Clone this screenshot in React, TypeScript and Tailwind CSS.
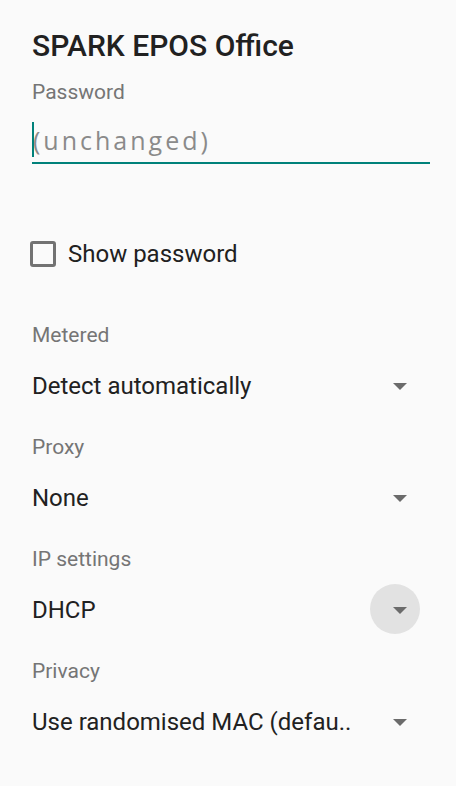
import React from "react";

const Arrow = ({ ripple }: { ripple?: boolean }) => (
  <div className="relative w-[50px] h-[50px] flex items-center justify-center">
    {ripple && (
      <div className="absolute left-[-5px] top-[-1px] w-[50px] h-[50px] rounded-full bg-[#e2e2e2]" />
    )}
    <svg className="relative" width="14" height="7" viewBox="0 0 14 7">
      <path d="M0 0 L14 0 L7 7 Z" fill="#6b6b6b" />
    </svg>
  </div>
);

const Section = ({
  label,
  value,
  ripple,
  first,
}: {
  label: string;
  value: string;
  ripple?: boolean;
  first?: boolean;
}) => (
  <div className={first ? "mt-[54px]" : "mt-[23px]"}>
    <div className="text-[21px] leading-[26px] text-[#757575]">{label}</div>
    <div className="mt-[13px] h-[50px] flex items-center justify-between">
      <div className="text-[24px] leading-[28px] text-[#212121] mb-[1px] whitespace-nowrap">
        {value}
      </div>
      <div className="mr-[5px]">
        <Arrow ripple={ripple} />
      </div>
    </div>
  </div>
);

export default function App() {
  return (
    <div
      className="w-[456px] h-[786px] bg-[#fafafa] pl-[32px] pr-[26px] flex flex-col overflow-hidden"
      style={{ fontFamily: "Roboto, 'Liberation Sans', sans-serif" }}
    >
      <div className="pt-[28px] text-[30px] leading-[36px] font-medium text-[#212121]">
        SPARK EPOS Office
      </div>
      <div className="mt-[15px] text-[21px] leading-[26px] text-[#757575]">Password</div>
      <div className="relative mt-[17px] h-[42px] border-b-2 border-[#00817a]">
        <div
          className="pt-[2px] pl-[1px] text-[25px] leading-[32px] text-[#8a8a8a] tracking-[3px]"
          style={{ fontFamily: "'Open Sans', sans-serif" }}
        >
          (unchanged)
        </div>
        <div className="absolute left-0 top-0 w-[2px] h-[35px] bg-[#00817a]" />
      </div>
      <div className="mt-[76px] flex items-center h-[28px] -ml-[2px]">
        <div className="w-[26px] h-[26px] border-[3px] border-[#727272] rounded-[3px]" />
        <div className="ml-[12px] text-[24px] leading-[28px] text-[#212121]">Show password</div>
      </div>
      <Section first label="Metered" value="Detect automatically" />
      <Section label="Proxy" value="None" />
      <Section label="IP settings" value="DHCP" ripple />
      <Section label="Privacy" value="Use randomised MAC (defau.." />
    </div>
  );
}
